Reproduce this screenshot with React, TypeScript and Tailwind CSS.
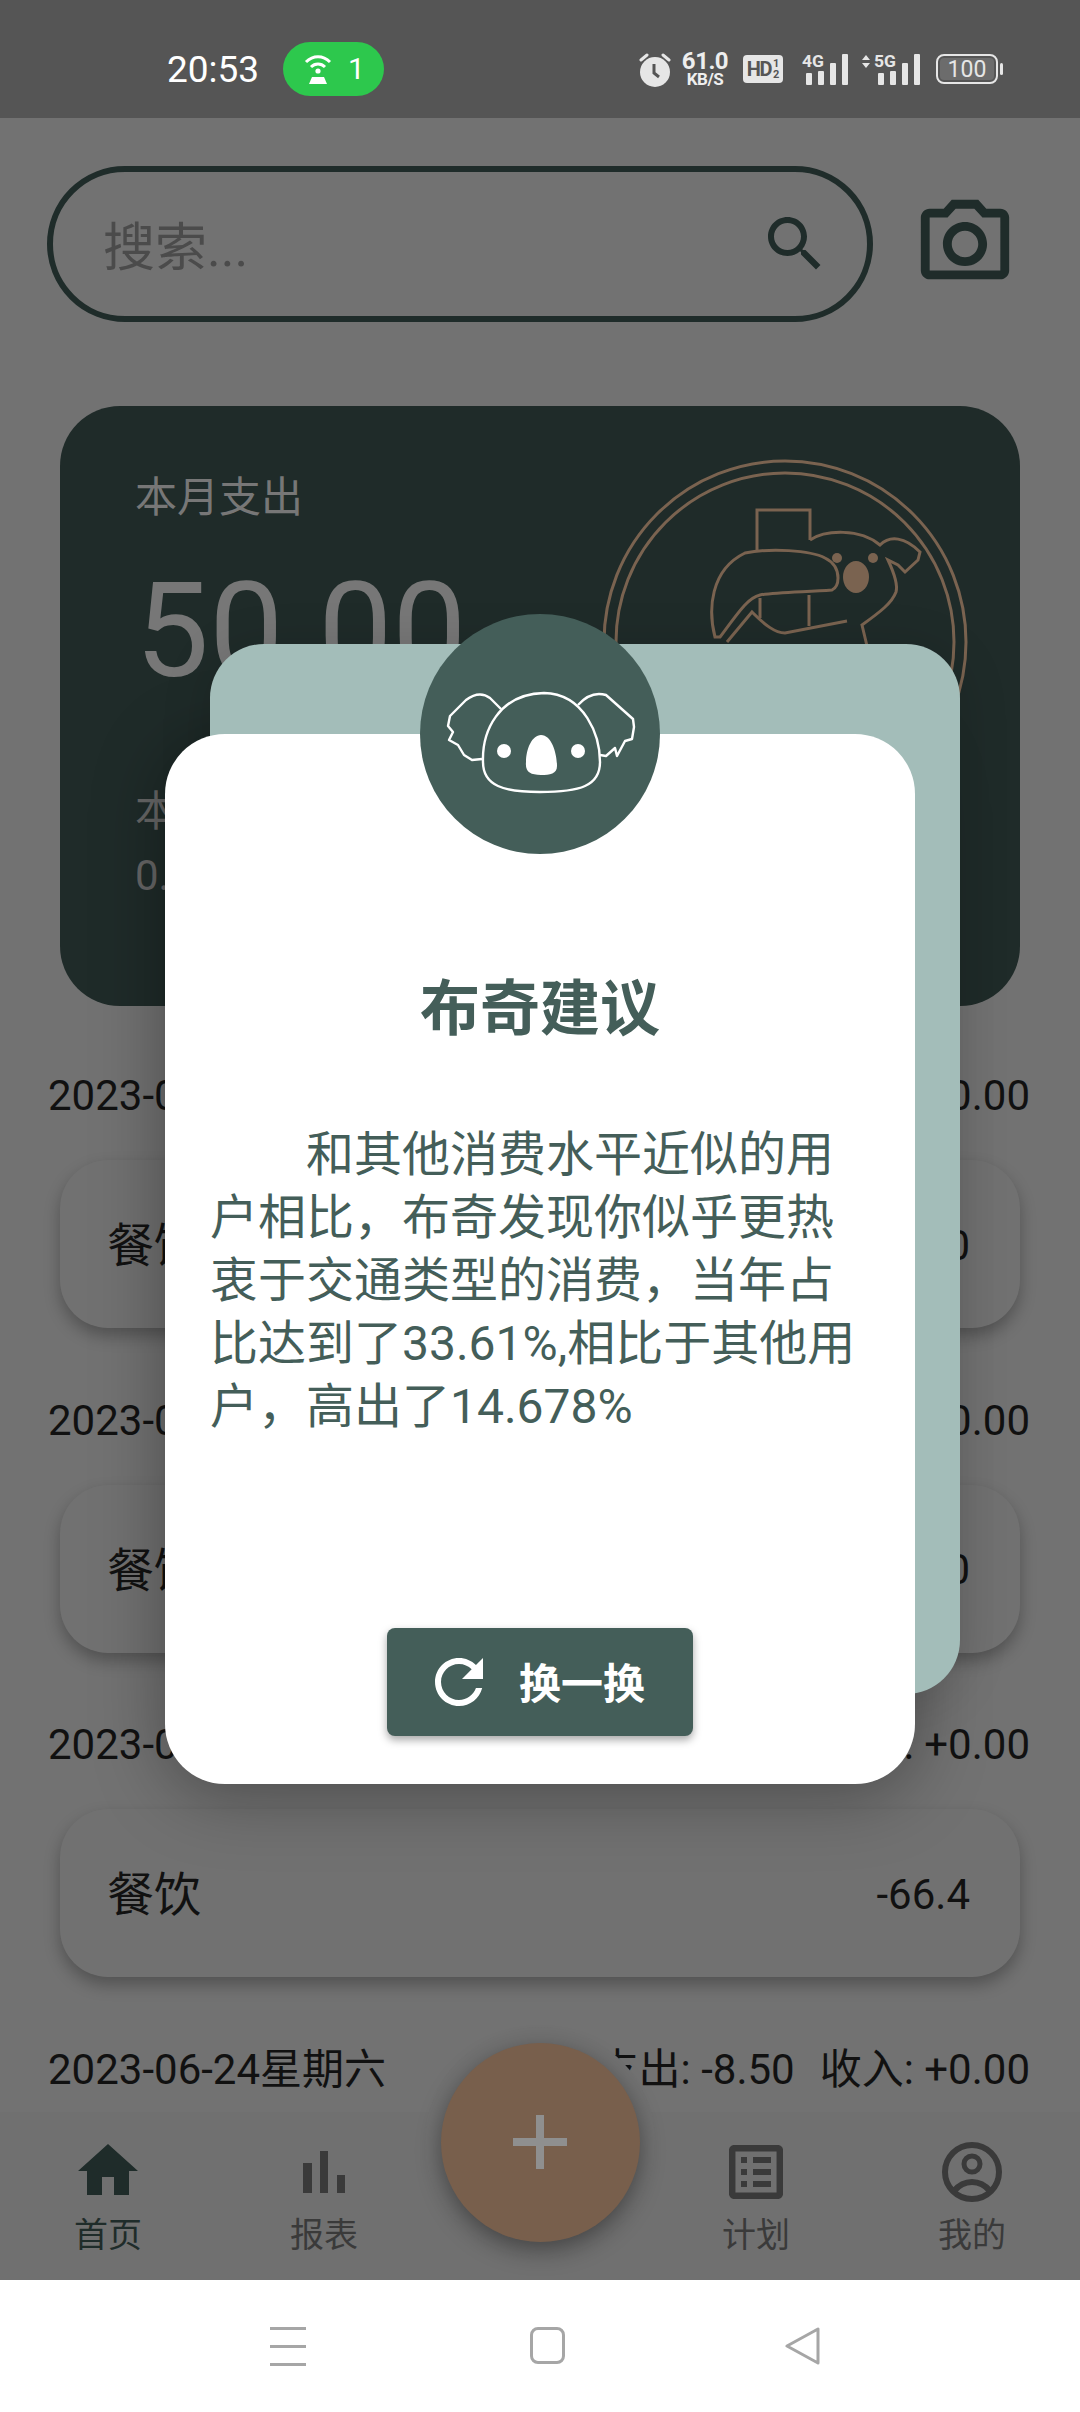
import React from "react";

const DK = "#1f2c2a";

function Alarm() {
  return (
    <svg width="32" height="36" viewBox="0 0 32 36">
      <path d="M2 9 L8 4 M30 9 L24 4" stroke="#e6e6e6" strokeWidth="3" strokeLinecap="round" />
      <circle cx="16" cy="21" r="15" fill="#e6e6e6" />
      <path d="M15 13 V22 L20 26" stroke="#555" strokeWidth="3" fill="none" />
    </svg>
  );
}

function Signal({ label, arrows }: { label: string; arrows?: boolean }) {
  return (
    <svg width={arrows ? 60 : 48} height="32" viewBox={arrows ? "0 0 60 32" : "0 0 48 32"}>
      {arrows && <path d="M1 7 L5 2 L9 7 Z M1 10 L5 15 L9 10 Z" fill="#e6e6e6" />}
      <text x={arrows ? 13 : 0} y="14" fontSize="17" fontWeight="700" fill="#e6e6e6" fontFamily="Roboto" textLength="22" lengthAdjust="spacingAndGlyphs">{label}</text>
      <g fill="#e6e6e6">
        <rect x={arrows ? 17 : 4} y="20" width="6" height="12" rx="1" />
        <rect x={arrows ? 29 : 16} y="18" width="6" height="14" rx="1" />
        <rect x={arrows ? 41 : 28} y="10" width="6" height="22" rx="1" />
        <rect x={arrows ? 53 : 40} y="1" width="6" height="31" rx="1" />
      </g>
    </svg>
  );
}

function WifiRouter() {
  return (
    <svg width="32" height="32" viewBox="0 0 32 32">
      <path d="M4 9 C11 2 21 2 28 9" stroke="#fff" strokeWidth="3" fill="none" />
      <path d="M9 14 C13 10 19 10 23 14" stroke="#fff" strokeWidth="3" fill="none" />
      <circle cx="16" cy="18" r="2.6" fill="#fff" />
      <path d="M10 24 H22 L25 31 H7 Z" fill="#fff" />
    </svg>
  );
}

function StatusBar() {
  return (
    <div className="h-[118px] shrink-0 bg-[#555555] flex items-center pl-[167px] pr-[82px] pt-[20px]">
      <span className="text-[37px] text-white leading-none w-[93px]">20:53</span>
      <div className="ml-[23px] w-[101px] h-[54px] rounded-[27px] bg-[#2dc84d] flex items-center pl-[19px] gap-[14px]">
        <WifiRouter />
        <span className="text-[30px] text-white leading-none">1</span>
      </div>
      <div className="ml-auto flex items-center">
        <Alarm />
        <div className="ml-[11px] w-[46px] flex flex-col items-center text-[#eeeeee] font-bold">
          <span className="text-[24px] leading-[20px] tracking-[-0.5px]">61.0</span>
          <span className="text-[17px] leading-[17px] tracking-[-0.5px]">KB/S</span>
        </div>
        <div className="ml-[15px] w-[40px] h-[28px] rounded-[4px] bg-[#e6e6e6] flex items-center justify-center text-[#555555] font-bold text-[20px] leading-none">
          <span className="tracking-[-1.5px]">HD</span>
          <span className="ml-[2px] flex flex-col text-[11px] leading-[11px]">
            <span>1</span>
            <span>2</span>
          </span>
        </div>
        <div className="ml-[19px]"><Signal label="4G" /></div>
        <div className="ml-[11px]"><Signal label="5G" arrows /></div>
        <div className="ml-[15px] w-[62px] h-[30px] rounded-[8px] border-2 border-[#e6e6e6] p-[2px] relative">
          <div className="w-full h-full rounded-[4px] bg-[#6c6c6c] flex items-center justify-center text-[#e6e6e6] text-[23px] leading-none">100</div>
          <div className="absolute right-[-7px] top-[7px] w-[3px] h-[12px] rounded-[2px] bg-[#e6e6e6]" />
        </div>
      </div>
    </div>
  );
}

function SearchRow() {
  return (
    <div className="flex items-center pt-[48px] pl-[47px]">
      <div className="w-[826px] h-[156px] rounded-[78px] border-[6px] border-[#1f2c2a] flex items-center pl-[50px] pr-[36px] justify-between">
        <span className="text-[52px] text-[#4b4b4b] leading-none pt-[10px]">搜索...</span>
        <svg width="72" height="72" viewBox="0 0 24 24" fill={DK}>
          <path d="M15.5 14h-.79l-.28-.27C15.41 12.59 16 11.11 16 9.5 16 5.91 13.09 3 9.5 3S3 5.91 3 9.5 5.91 16 9.5 16c1.61 0 3.09-.59 4.23-1.57l.27.28v.79l5 4.99L20.49 19l-4.99-5zm-6 0C7.01 14 5 11.99 5 9.5S7.01 5 9.5 5 14 7.01 14 9.5 11.99 14 9.5 14z" />
        </svg>
      </div>
      <svg width="106" height="106" viewBox="0 0 24 24" fill={DK} className="ml-[39px]">
        <path d="M20 4h-3.17L15 2H9L7.17 4H4c-1.1 0-2 .9-2 2v12c0 1.1.9 2 2 2h16c1.1 0 2-.9 2-2V6c0-1.1-.9-2-2-2zm0 14H4V6h4.05l1.83-2h4.24l1.83 2H20v12zM12 7c-2.76 0-5 2.24-5 5s2.24 5 5 5 5-2.24 5-5-2.24-5-5-5zm0 8c-1.65 0-3-1.35-3-3s1.35-3 3-3 3 1.35 3 3-1.35 3-3 3z" />
      </svg>
    </div>
  );
}

function Watermark() {
  return (
    <svg width="400" height="400" viewBox="0 0 400 400" fill="none" stroke="#7a6350" strokeWidth="3" className="absolute left-[520px] top-[34px]">
      <circle cx="205" cy="202" r="181" />
      <circle cx="205" cy="202" r="169" />
      <path d="M177 110 V70 H230 V100" />
      <path d="M180 158 V178 M229 155 V186" />
      <path d="M252 150 C225 152 195 152 180 155 C168 158 160 170 140 197 L135 197 C128 170 130 130 165 113 C190 108 230 110 245 118 C255 123 258 130 258 138 C258 144 256 148 252 150 Z" />
      <path d="M147 202 L172 172 C185 185 195 193 205 193 L267 181" />
      <path d="M230 100 C245 90 280 88 300 105 C310 95 325 97 340 112 L338 120 L325 132 L318 125 L308 120 C315 135 318 145 316 152 C312 163 300 172 282 185 L287 206" />
      <g fill="#7a6350" stroke="none">
        <circle cx="257" cy="118" r="5" />
        <circle cx="293" cy="118" r="5" />
        <ellipse cx="276" cy="137" rx="13" ry="16" />
      </g>
    </svg>
  );
}

function SummaryCard() {
  return (
    <div className="relative mx-[60px] mt-[84px] h-[600px] rounded-[60px] bg-[#1f2b29] pl-[75px] pt-[69px] overflow-hidden">
      <Watermark />
      <div className="relative text-[42px] leading-[46px] text-[#777777]">本月支出</div>
      <div className="relative mt-[40px] text-[132px] leading-[140px] text-[#777777]">50.00</div>
      <div className="relative mt-[88px] text-[42px] leading-[46px] text-[#666666]">本月收入</div>
      <div className="relative mt-[18px] text-[42px] leading-[46px] text-[#666666]">0.00</div>
    </div>
  );
}

const days = [
  { date: "2023-06-27星期二", out: "-50.00", item: "餐饮", val: "-50.0" },
  { date: "2023-06-26星期一", out: "-32.00", item: "餐饮", val: "-32.0" },
  { date: "2023-06-25星期日", out: "-66.40", item: "餐饮", val: "-66.4" },
];

function DayHeader({ date, out }: { date: string; out: string }) {
  return (
    <div className="h-[64px] pt-[4px] px-[48px] flex items-center justify-between text-[42px] text-[#111111] leading-none">
      <span>{date}</span>
      <span className="pr-[2px]">
        支出: {out}
        <span className="ml-[25px]">收入: +0.00</span>
      </span>
    </div>
  );
}

function DayList() {
  return (
    <div className="mt-[56px]">
      {days.map((d) => (
        <div key={d.date} className="h-[324.5px]">
          <DayHeader date={d.date} out={d.out} />
          <div className="mx-[60px] mt-[34px] h-[168px] rounded-[48px] bg-[#717171] shadow-[0_8px_16px_rgba(0,0,0,0.28)] flex items-center justify-between pl-[47px] pr-[50px] pt-[3px] text-[#111111]">
            <span className="text-[47px] leading-none">{d.item}</span>
            <span className="text-[42px] leading-none">{d.val}</span>
          </div>
        </div>
      ))}
      <DayHeader date="2023-06-24星期六" out="-8.50" />
    </div>
  );
}

function NavItem({ label, color, children }: { label: string; color: string; children: React.ReactNode }) {
  return (
    <div className="w-[216px] flex flex-col items-center">
      <div className="h-[60px] w-full flex items-end justify-center">{children}</div>
      <span className={`mt-[16px] text-[34px] leading-[42px] ${color}`}>{label}</span>
    </div>
  );
}

function BottomNav() {
  return (
    <div className="absolute left-0 right-0 top-[2112px] h-[168px] bg-[#707070] flex pt-[26px]">
      <NavItem label="首页" color="text-[#1f2c2a]">
        <svg width="60" height="52" viewBox="0 0 60 52" fill={DK} className="mb-[2px]">
          <path d="M30 0 L60 27 H51 V51 H36 V33 H24 V51 H9 V27 H0 Z" />
        </svg>
      </NavItem>
      <NavItem label="报表" color="text-[#3a3a3a]">
        <svg width="42" height="42" viewBox="0 0 42 42" fill="#3a3a3a" className="mb-[5px]">
          <rect x="0" y="12" width="9" height="30" />
          <rect x="17" y="0" width="8" height="42" />
          <rect x="34" y="24" width="8" height="18" />
        </svg>
      </NavItem>
      <div className="w-[216px]" />
      <NavItem label="计划" color="text-[#3a3a3a]">
        <svg width="54" height="54" viewBox="0 0 54 54" className="mb-[-1px]">
          <rect x="3.2" y="3.2" width="47.6" height="47.6" rx="2" fill="none" stroke="#3a3a3a" strokeWidth="6.5" />
          <g fill="#3a3a3a">
            <rect x="12" y="12" width="6" height="6" />
            <rect x="24" y="12" width="18" height="6" />
            <rect x="12" y="24" width="6" height="6" />
            <rect x="24" y="24" width="18" height="6" />
            <rect x="12" y="36" width="6" height="6" />
            <rect x="24" y="36" width="18" height="6" />
          </g>
        </svg>
      </NavItem>
      <NavItem label="我的" color="text-[#3a3a3a]">
        <svg width="60" height="60" viewBox="0 0 60 60" fill="none" stroke="#3a3a3a" className="mb-[-4px]">
          <circle cx="30" cy="30" r="27" strokeWidth="6" />
          <circle cx="30" cy="22" r="8" strokeWidth="5" />
          <path d="M12 49 C22 37 38 37 48 49" strokeWidth="6" />
        </svg>
      </NavItem>
    </div>
  );
}

function Fab() {
  return (
    <div className="absolute left-[425px] top-[2027px] w-[230px] h-[230px] rounded-full bg-[#717171] flex items-center justify-center">
      <div className="w-[199px] h-[199px] rounded-full bg-[#785f4c] shadow-[0_8px_24px_rgba(0,0,0,0.4)] flex items-center justify-center">
        <svg width="54" height="54" viewBox="0 0 54 54" fill="#8f8f8f">
          <rect x="23" y="0" width="8" height="54" />
          <rect x="0" y="23" width="54" height="8" />
        </svg>
      </div>
    </div>
  );
}

function SystemNav() {
  return (
    <div className="absolute left-0 right-0 top-[2280px] h-[132px] bg-white flex items-start pt-[47px] pl-[270px]">
      <div className="w-[36px] h-[39px] flex flex-col justify-between">
        <div className="h-[3px] bg-[#a6a6a6]" />
        <div className="h-[3px] bg-[#a6a6a6]" />
        <div className="h-[3px] bg-[#a6a6a6]" />
      </div>
      <div className="ml-[224px] w-[35px] h-[37px] rounded-[8px] border-[3px] border-[#a6a6a6]" />
      <svg width="36" height="38" viewBox="0 0 36 38" fill="none" stroke="#a6a6a6" strokeWidth="3" strokeLinejoin="round" className="ml-[220px]">
        <path d="M33 2 V36 L2 19 Z" />
      </svg>
    </div>
  );
}

function Koala() {
  return (
    <svg width="240" height="240" viewBox="0 0 240 240" fill="none" stroke="#fff" strokeWidth="2.4" strokeLinejoin="round">
      <path d="M63 148 C62 118 78 80 124 79 C165 80 180 122 180 148 C180 172 160 178 120 178 C84 178 63 172 63 148 Z" />
      <path d="M81 95 L70 84 C62 78 54 80 46 86 L30 102 L28 112 L33 118 L29 126 L38 131 L44 141 L52 146 L62 145" />
      <path d="M158 91 C166 82 176 78 186 81 L213 105 L214 113 L212 125 L205 127 L197 142 L195 134 L186 142 L180 141" />
      <g fill="#fff" stroke="none">
        <path d="M121 121 C132 121 137 140 137 152 C137 160 130 161 121 161 C110 161 105 158 106 148 C106 135 112 121 121 121 Z" />
        <circle cx="84" cy="137" r="7" />
        <circle cx="158" cy="137" r="7" />
      </g>
    </svg>
  );
}

function Dialog() {
  return (
    <>
      <div className="absolute left-[165px] top-[734px] w-[750px] h-[1050px] rounded-[60px] shadow-[0_10px_70px_rgba(0,0,0,0.35)]" />
      <div className="absolute left-[210px] top-[644px] w-[750px] h-[1050px] rounded-[54px] bg-[#a3bdb9] shadow-[0_6px_50px_rgba(0,0,0,0.15)]" />
      <div className="absolute left-[165px] top-[734px] w-[750px] h-[1050px] rounded-[60px] bg-white flex flex-col items-center px-[45px] pt-[236px] pb-[48px] text-[#445e59]">
        <div className="text-[60px] leading-[80px] font-bold">布奇建议</div>
        <p className="mt-[73px] w-[660px] text-[48px] leading-[63px] indent-[96px]">
          和其他消费水平近似的用户相比，布奇发现你似乎更热衷于交通类型的消费，当年占比达到了33.61%,相比于其他用户，高出了14.678%
        </p>
        <button className="mt-auto w-[306px] h-[108px] rounded-[8px] bg-[#445e59] shadow-[0_4px_8px_rgba(0,0,0,0.35)] flex items-center pl-[36px] text-white">
          <svg width="72" height="72" viewBox="0 0 24 24" fill="#fff">
            <path d="M17.65 6.35C16.2 4.9 14.21 4 12 4c-4.42 0-7.99 3.58-7.99 8s3.57 8 7.99 8c3.73 0 6.84-2.55 7.73-6h-2.08c-.82 2.33-3.04 4-5.65 4-3.31 0-6-2.69-6-6s2.69-6 6-6c1.66 0 3.14.69 4.22 1.78L13 11h7V4l-2.35 2.35z" />
          </svg>
          <span className="ml-[24px] pt-[6px] text-[42px] leading-none font-bold">换一换</span>
        </button>
      </div>
      <div className="absolute left-[420px] top-[614px] w-[240px] h-[240px] rounded-full bg-[#445e59]">
        <Koala />
      </div>
    </>
  );
}

export default function App() {
  return (
    <div className="relative w-[1080px] h-[2412px] overflow-hidden bg-[#727272] font-[Roboto,'Noto_Sans_CJK_SC',sans-serif]">
      <StatusBar />
      <SearchRow />
      <SummaryCard />
      <DayList />
      <BottomNav />
      <Fab />
      <SystemNav />
      <Dialog />
    </div>
  );
}
